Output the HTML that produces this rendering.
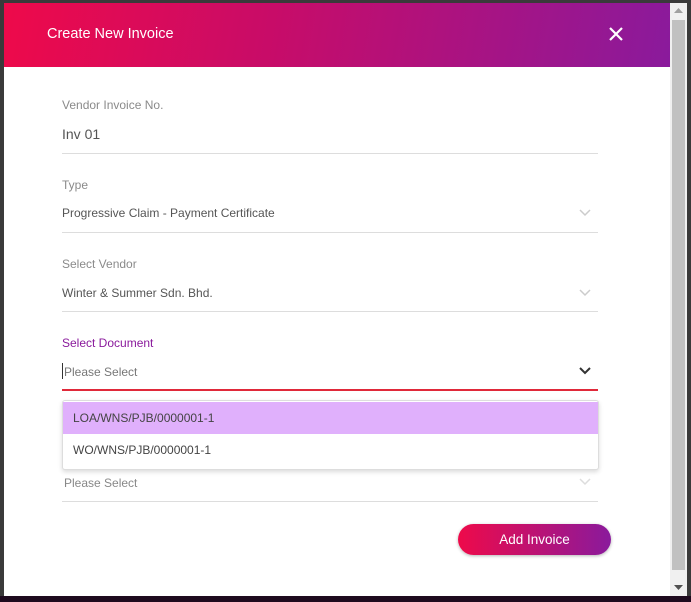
<!DOCTYPE html>
<html><head><style>
body{margin:0;width:691px;height:602px;background:#3a3a3a;position:relative;overflow:hidden;font-family:"Liberation Sans",sans-serif}
.bot{position:absolute;left:0;top:596px;width:691px;height:6px;background:#1e0a1e}
.modal{position:absolute;left:4px;top:3px;width:666px;height:593px;background:#fff}
.hdr{position:absolute;left:0;top:0;width:666px;height:64px;background:linear-gradient(100deg,#ee0a4a 0%,#c80c68 40%,#8a1a9c 100%)}
.hdr .t{position:absolute;left:43px;top:23px;color:#fff;font-size:14.5px}
.sb{position:absolute;left:670px;top:3px;width:17px;height:593px;background:#f0f0f0}
.thumb{position:absolute;left:2px;top:17px;width:13px;height:550px;background:#c1c1c1}
.r{position:absolute;left:687px;top:0;width:4px;height:596px;background:#3a3a3a}
.l{position:absolute;left:62px;font-size:12px;color:#8a8a8a}
.v{position:absolute;left:62px;font-size:12px;color:#555}
.ln{position:absolute;left:62px;width:536px;height:1px;background:#ddd}
.ch{position:absolute;left:579px;width:12px;height:8px}
.dd{position:absolute;left:62px;top:400px;width:535px;height:68px;background:#fff;border:1px solid #ddd;border-radius:3px;box-shadow:0 2px 5px rgba(0,0,0,.15)}
.it{height:32px;line-height:32px;padding-left:10px;font-size:12px;color:#444}
.btn{position:absolute;left:458px;top:524px;width:153px;height:31px;border-radius:16px;background:linear-gradient(90deg,#ee0a4a,#8a1a9c);color:#fff;font-size:13.5px;text-align:center;line-height:31px;box-shadow:0 1px 3px rgba(0,0,0,.3)}
</style></head><body>
<div class="modal"><div class="hdr"><div class="t">Create New Invoice</div>
<svg style="position:absolute;left:605px;top:24px" width="14" height="14"><path d="M1 1L13 13M13 1L1 13" stroke="#fff" stroke-width="2.2"/></svg></div></div>
<div class="sb"><svg style="position:absolute;left:4px;top:5px" width="9" height="6"><path d="M0 5L4.5 0L9 5Z" fill="#a0a0a0"/></svg><div class="thumb"></div><svg style="position:absolute;left:4px;top:582px" width="9" height="6"><path d="M0 0L4.5 5L9 0Z" fill="#505050"/></svg></div>
<div class="r"></div><div class="bot"></div>

<div class="l" style="top:98px">Vendor Invoice No.</div>
<div class="v" style="top:126px;font-size:14px">Inv 01</div>
<div class="ln" style="top:153px"></div>

<div class="l" style="top:178px">Type</div>
<div class="v" style="top:206px">Progressive Claim - Payment Certificate</div>
<svg class="ch" style="top:209px" viewBox="0 0 12 8"><path d="M1 1L6 6L11 1" stroke="#ccc" stroke-width="1.5" fill="none"/></svg>
<div class="ln" style="top:232px"></div>

<div class="l" style="top:257px">Select Vendor</div>
<div class="v" style="top:286px">Winter &amp; Summer Sdn. Bhd.</div>
<svg class="ch" style="top:289px" viewBox="0 0 12 8"><path d="M1 1L6 6L11 1" stroke="#ccc" stroke-width="1.5" fill="none"/></svg>
<div class="ln" style="top:311px"></div>

<div class="l" style="top:336px;color:#8a1a9c">Select Document</div>
<div style="position:absolute;left:62px;top:363px;width:1px;height:16px;background:#333"></div>
<div class="v" style="top:365px;left:64px;color:#777">Please Select</div>
<svg class="ch" style="top:367px" viewBox="0 0 12 8"><path d="M1 1L6 6L11 1" stroke="#333" stroke-width="2" fill="none"/></svg>
<div class="ln" style="top:389px;height:2px;background:#e0293a"></div>

<div class="v" style="top:476px;left:64px;color:#888">Please Select</div>
<svg class="ch" style="top:478px" viewBox="0 0 12 8"><path d="M1 1L6 6L11 1" stroke="#ddd" stroke-width="1.5" fill="none"/></svg>
<div class="ln" style="top:501px"></div>

<div class="dd"><div class="it" style="background:#e0b0fc;margin-top:1px">LOA/WNS/PJB/0000001-1</div><div class="it">WO/WNS/PJB/0000001-1</div></div>
<div class="btn">Add Invoice</div>
</body></html>
